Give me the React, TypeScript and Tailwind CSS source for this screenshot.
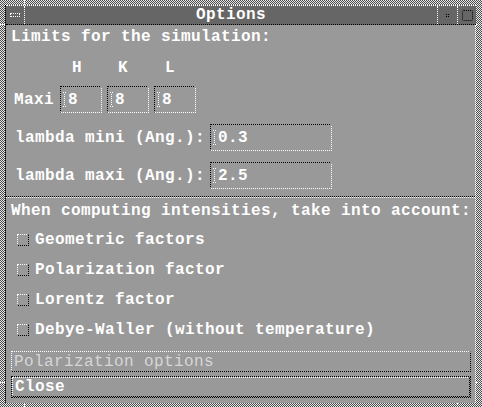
const FONT = "font-['Liberation_Mono','DejaVu_Sans_Mono',monospace] font-bold text-[16px] tracking-[0.4px] leading-[20px]";

function Cursor() {
    return (
        <svg width="4" height="16" viewBox="0 0 4 16" className="mr-[1px] shrink-0">
            <rect x="0" y="0" width="1" height="1" fill="#fff" />
            <rect x="2" y="0" width="1" height="1" fill="#fff" />
            <rect x="1" y="2" width="1" height="1" fill="#fff" />
            <rect x="1" y="4" width="1" height="1" fill="#fff" />
            <rect x="1" y="6" width="1" height="1" fill="#fff" />
            <rect x="1" y="8" width="1" height="1" fill="#fff" />
            <rect x="1" y="10" width="1" height="1" fill="#fff" />
            <rect x="1" y="12" width="1" height="1" fill="#fff" />
            <rect x="0" y="14" width="1" height="1" fill="#fff" />
            <rect x="2" y="14" width="1" height="1" fill="#fff" />
        </svg>
    );
}

function Field({ value, width }: { value: string; width: string }) {
    return (
        <div
            className={`${width} h-[27px] flex items-center pl-[2px] border border-dotted border-t-black border-l-black border-b-white border-r-white`}
        >
            <Cursor />
            <span>{value}</span>
        </div>
    );
}

function Check({ label }: { label: string }) {
    return (
        <div className="h-[30px] flex items-center pl-[6px] whitespace-nowrap">
            <div className="w-[12px] h-[12px] border border-dotted border-t-white border-l-white border-b-black border-r-black mr-[6px]" />
            <span>{label}</span>
        </div>
    );
}

export default function App() {
    return (
        <div
            className={`relative w-[482px] h-[407px] pl-[5px] pt-[5px] pr-[6px] pb-[4px] bg-[repeating-conic-gradient(#e8e8e8_0_25%,#4a4a4a_0_50%)] bg-[length:2px_2px] text-white ${FONT}`}
        >
            {/* resize handle ticks */}
            <span className="absolute left-[24px] top-0 h-[5px] border-l border-dotted border-white" />
            <span className="absolute left-[457px] top-0 h-[5px] border-l border-dotted border-white" />
            <span className="absolute left-[24px] bottom-0 h-[4px] border-l border-dotted border-white" />
            <span className="absolute left-[457px] bottom-0 h-[4px] border-l border-dotted border-white" />
            <span className="absolute left-0 top-[24px] w-[5px] border-t border-dotted border-white" />
            <span className="absolute right-0 top-[24px] w-[6px] border-t border-dotted border-white" />
            <span className="absolute left-0 top-[382px] w-[5px] border-t border-dotted border-white" />
            <span className="absolute right-0 top-[382px] w-[6px] border-t border-dotted border-white" />

            <div className="w-full h-full flex flex-col border-l border-dotted border-black">
                {/* title bar */}
                <div className="h-[20px] flex bg-[#666666] border-t border-b border-dotted border-t-white border-b-black">
                    <div className="w-[19px] flex items-center justify-center border-r border-dotted border-white">
                        <div className="w-[10px] h-[4px] border border-dotted border-white" />
                    </div>
                    <div className="flex-1 flex items-center justify-center leading-none">Options</div>
                    <div className="w-[20px] flex items-center justify-center border-l border-dotted border-white">
                        <div className="w-[3px] h-[3px] border border-dotted border-black" />
                    </div>
                    <div className="w-[19px] flex items-center justify-center border-l border-dotted border-white">
                        <div className="w-[11px] h-[11px] rounded-[2px] border border-dotted border-black" />
                    </div>
                </div>

                {/* content */}
                <div className="flex-1 flex flex-col bg-[#999999] border-r border-dotted border-white pl-[5px] pr-[4px] whitespace-nowrap">
                    <div className="mt-[2px] h-[20px] flex items-center">Limits for the simulation:</div>

                    <div className="mt-[11px] h-[20px] flex">
                        <div className="w-[49px]" />
                        <div className="flex gap-[5px]">
                            <div className="w-[42px] pl-[12px]">H</div>
                            <div className="w-[42px] pl-[11px]">K</div>
                            <div className="w-[42px] pl-[11px]">L</div>
                        </div>
                    </div>

                    <div className="mt-[8px] flex items-center">
                        <div className="w-[49px] pl-[3px]">Maxi</div>
                        <div className="flex gap-[5px]">
                            <Field value="8" width="w-[42px]" />
                            <Field value="8" width="w-[42px]" />
                            <Field value="8" width="w-[42px]" />
                        </div>
                    </div>

                    <div className="mt-[11px] flex items-center">
                        <div className="w-[199px] pl-[4px]">lambda mini (Ang.):</div>
                        <Field value="0.3" width="w-[122px]" />
                    </div>

                    <div className="mt-[11px] flex items-center">
                        <div className="w-[199px] pl-[4px]">lambda maxi (Ang.):</div>
                        <Field value="2.5" width="w-[122px]" />
                    </div>

                    <div className="mt-[7px] -ml-[5px] -mr-[4px] border-t border-b border-dotted border-t-black border-b-white" />

                    <div className="mt-[3px] h-[20px] flex items-center">When computing intensities, take into account:</div>

                    <div className="mt-[4px] flex flex-col">
                        <Check label="Geometric factors" />
                        <Check label="Polarization factor" />
                        <Check label="Lorentz factor" />
                        <Check label="Debye-Waller (without temperature)" />
                    </div>

                    <div className="mt-[6px] h-[21px] flex items-center pl-[2px] border border-dotted border-t-white border-l-white border-b-black border-r-black font-normal text-[#d6d6d6]">
                        Polarization options
                    </div>

                    <div className="mt-[4px] h-[22px] border border-dotted border-black">
                        <div className="h-full flex items-center pl-[2px] border border-dotted border-t-white border-l-white border-b-black border-r-black">
                            Close
                        </div>
                    </div>
                </div>
            </div>
        </div>
    );
}
